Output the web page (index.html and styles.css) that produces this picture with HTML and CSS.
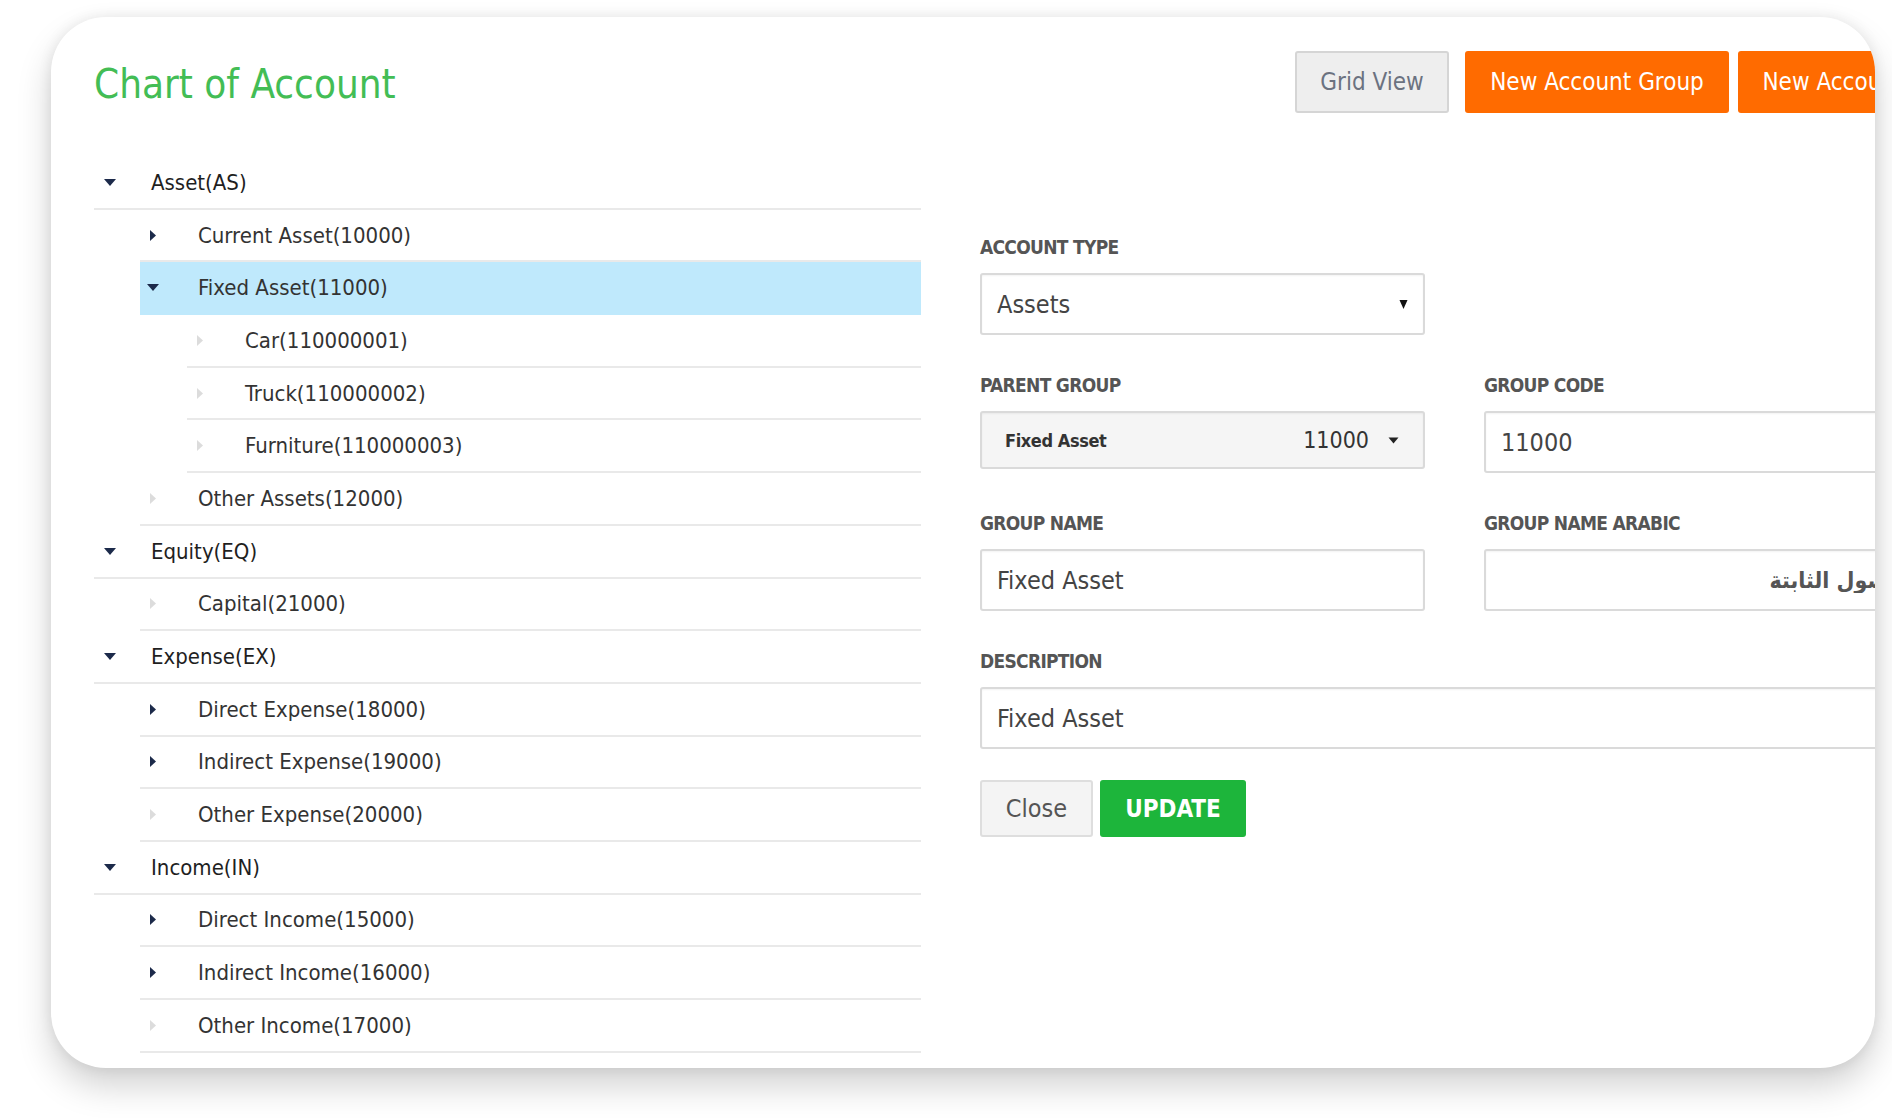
FILE: index.html
```html
<!DOCTYPE html>
<html lang="en">
<head>
<meta charset="utf-8">
<title>Chart of Account</title>
<link rel="stylesheet" href="styles.css">
</head>
<body>
<div class="page">
  <div class="card">
    <div class="header">
      <h1 class="title">Chart of Account</h1>
      <div class="btn btn-grid">Grid View</div>
      <div class="btn btn-orange btn-nag">New Account Group</div>
      <div class="btn btn-orange btn-na">New Account</div>
    </div>

    <div class="main">
      <div class="tree">
        <div class="row root"><span class="caret"><svg width="14" height="9" viewBox="0 0 14 9"><path d="M1 1h12L7 8z" class="dark"/></svg></span><span class="txt">Asset(AS)</span></div>
        <div class="row lvl1"><span class="caret"><svg width="8" height="13" viewBox="0 0 8 13"><path d="M1 1v11l6-5.5z" class="dark"/></svg></span><span class="txt">Current Asset(10000)</span></div>
        <div class="row lvl1 selected"><span class="caret"><svg width="14" height="9" viewBox="0 0 14 9"><path d="M1 1h12L7 8z" class="dark"/></svg></span><span class="txt">Fixed Asset(11000)</span></div>
        <div class="row lvl2"><span class="caret"><svg width="8" height="13" viewBox="0 0 8 13"><path d="M1 1v11l6-5.5z" class="light"/></svg></span><span class="txt">Car(110000001)</span></div>
        <div class="row lvl2"><span class="caret"><svg width="8" height="13" viewBox="0 0 8 13"><path d="M1 1v11l6-5.5z" class="light"/></svg></span><span class="txt">Truck(110000002)</span></div>
        <div class="row lvl2"><span class="caret"><svg width="8" height="13" viewBox="0 0 8 13"><path d="M1 1v11l6-5.5z" class="light"/></svg></span><span class="txt">Furniture(110000003)</span></div>
        <div class="row lvl1"><span class="caret"><svg width="8" height="13" viewBox="0 0 8 13"><path d="M1 1v11l6-5.5z" class="light"/></svg></span><span class="txt">Other Assets(12000)</span></div>
        <div class="row root"><span class="caret"><svg width="14" height="9" viewBox="0 0 14 9"><path d="M1 1h12L7 8z" class="dark"/></svg></span><span class="txt">Equity(EQ)</span></div>
        <div class="row lvl1"><span class="caret"><svg width="8" height="13" viewBox="0 0 8 13"><path d="M1 1v11l6-5.5z" class="light"/></svg></span><span class="txt">Capital(21000)</span></div>
        <div class="row root"><span class="caret"><svg width="14" height="9" viewBox="0 0 14 9"><path d="M1 1h12L7 8z" class="dark"/></svg></span><span class="txt">Expense(EX)</span></div>
        <div class="row lvl1"><span class="caret"><svg width="8" height="13" viewBox="0 0 8 13"><path d="M1 1v11l6-5.5z" class="dark"/></svg></span><span class="txt">Direct Expense(18000)</span></div>
        <div class="row lvl1"><span class="caret"><svg width="8" height="13" viewBox="0 0 8 13"><path d="M1 1v11l6-5.5z" class="dark"/></svg></span><span class="txt">Indirect Expense(19000)</span></div>
        <div class="row lvl1"><span class="caret"><svg width="8" height="13" viewBox="0 0 8 13"><path d="M1 1v11l6-5.5z" class="light"/></svg></span><span class="txt">Other Expense(20000)</span></div>
        <div class="row root"><span class="caret"><svg width="14" height="9" viewBox="0 0 14 9"><path d="M1 1h12L7 8z" class="dark"/></svg></span><span class="txt">Income(IN)</span></div>
        <div class="row lvl1"><span class="caret"><svg width="8" height="13" viewBox="0 0 8 13"><path d="M1 1v11l6-5.5z" class="dark"/></svg></span><span class="txt">Direct Income(15000)</span></div>
        <div class="row lvl1"><span class="caret"><svg width="8" height="13" viewBox="0 0 8 13"><path d="M1 1v11l6-5.5z" class="dark"/></svg></span><span class="txt">Indirect Income(16000)</span></div>
        <div class="row lvl1"><span class="caret"><svg width="8" height="13" viewBox="0 0 8 13"><path d="M1 1v11l6-5.5z" class="light"/></svg></span><span class="txt">Other Income(17000)</span></div>
      </div>

      <div class="form">
        <div class="field">
          <div class="label">Account Type</div>
          <div class="input select">
            <span class="grow">Assets</span>
            <svg width="9" height="11" viewBox="0 0 9 11"><path d="M0.5 1h8L4.5 10z" fill="#111"/></svg>
          </div>
        </div>
        <div class="field empty"></div>

        <div class="field">
          <div class="label">Parent Group</div>
          <div class="input parent">
            <span class="grow pname">Fixed Asset</span>
            <span class="pcode">11000</span>
            <svg class="pcaret" width="11" height="7" viewBox="0 0 11 7"><path d="M0.5 0.5h10L5.5 6.5z" fill="#222"/></svg>
          </div>
        </div>
        <div class="field">
          <div class="label">Group Code</div>
          <input class="input" type="text" value="11000" readonly>
        </div>

        <div class="field">
          <div class="label">Group Name</div>
          <input class="input" type="text" value="Fixed Asset" readonly>
        </div>
        <div class="field">
          <div class="label">Group Name Arabic</div>
          <input class="input arabic" type="text" dir="rtl" value="الأصول الثابتة" readonly>
        </div>

        <div class="field wide">
          <div class="label">Description</div>
          <input class="input" type="text" value="Fixed Asset" readonly>
        </div>

        <div class="actions">
          <div class="btn-close">Close</div>
          <div class="btn-update">UPDATE</div>
        </div>
      </div>
    </div>
  </div>
</div>
</body>
</html>
```
FILE: styles.css
```css
html, body {
  margin: 0;
  padding: 0;
  background: #ffffff;
}

body {
  font-family: "DejaVu Sans Condensed", "DejaVu Sans", sans-serif;
  font-stretch: condensed;
  color: #333;
}

.page {
  padding: 17px 0 50px 51px;
}

.card {
  width: 1824px;
  height: 1051px;
  box-sizing: border-box;
  padding: 34px 0 0 43px;
  background: #fff;
  border-radius: 55px;
  overflow: hidden;
  box-shadow: 0 18px 34px rgba(0, 0, 0, 0.18), 0 0 14px rgba(0, 0, 0, 0.08);
}

/* header */
.header {
  display: flex;
  align-items: center;
  height: 62px;
}

.title {
  flex: 0 0 1201px;
  margin: 0;
  font-size: 40px;
  font-weight: normal;
  color: #43bd55;
  line-height: 1;
  position: relative;
  top: 2px;
}

.btn {
  flex: none;
  height: 62px;
  box-sizing: border-box;
  display: flex;
  align-items: center;
  justify-content: center;
  font-size: 24px;
  border-radius: 3px;
  white-space: nowrap;
}

.btn-grid {
  width: 154px;
  margin-right: 16px;
  background: #eeeeee;
  border: 2px solid #d5d5d5;
  color: #6b7280;
}

.btn-orange {
  background: #ff6b00;
  color: #fff;
}

.btn-nag {
  width: 264px;
  margin-right: 9px;
}

.btn-na {
  width: 190px;
}

/* main */
.main {
  display: flex;
  align-items: flex-start;
  margin-top: 44px;
}

.tree {
  flex: 0 0 827px;
}

.row {
  display: flex;
  align-items: center;
  height: 50.7px;
  border-bottom: 2px solid #e9e9e9;
  font-size: 22px;
  color: #333;
  white-space: nowrap;
}

.row.root {
  color: #1f1f1f;
}

.row.lvl1 {
  margin-left: 46px;
}

.row.lvl2 {
  margin-left: 93px;
}

.row.selected {
  background: #bfe9fc;
  border-bottom-color: #bfe9fc;
}

.caret {
  display: flex;
  justify-content: center;
  align-items: center;
  width: 26px;
  margin-right: 32px;
}

.row.root .caret {
  width: 32px;
  margin-right: 25px;
}

.caret .dark {
  fill: #1c2a4a;
}

.caret .light {
  fill: #dcdcdc;
}

/* form */
.form {
  flex: none;
  margin-left: 59px;
  padding-top: 80px;
  display: grid;
  grid-template-columns: 445px 445px;
  column-gap: 59px;
  row-gap: 40px;
}

.field.wide {
  grid-column: 1 / span 2;
}

.label {
  height: 20px;
  line-height: 20px;
  margin-bottom: 16px;
  font-size: 19px;
  font-weight: bold;
  letter-spacing: -0.7px;
  text-transform: uppercase;
  color: #555;
  white-space: nowrap;
}

.input {
  display: flex;
  align-items: center;
  width: 100%;
  height: 62px;
  box-sizing: border-box;
  margin: 0;
  padding: 0 15px;
  border: 2px solid #dadada;
  border-radius: 3px;
  background: #fff;
  box-shadow: inset 0 1px 2px rgba(0, 0, 0, 0.05);
  font-family: "DejaVu Sans Condensed", "DejaVu Sans", sans-serif;
  font-stretch: condensed;
  font-size: 25px;
  color: #444;
  outline: none;
}

.select {
  padding-right: 15px;
}

.grow {
  flex: 1;
}

.parent {
  height: 58px;
  padding: 0 24px 0 23px;
  background: #f5f5f5;
}

.pname {
  font-size: 18px;
  font-weight: bold;
  color: #333;
  letter-spacing: -0.4px;
}

.pcode {
  font-size: 23px;
  color: #333;
}

.pcaret {
  margin-left: 19px;
}

.arabic {
  font-family: "DejaVu Sans", sans-serif;
  font-weight: bold;
  font-size: 23px;
  color: #555;
  text-align: right;
  padding-right: 17px;
}

.actions {
  grid-column: 1 / span 2;
  display: flex;
  gap: 7px;
  margin-top: -9px;
}

.btn-close,
.btn-update {
  height: 57px;
  box-sizing: border-box;
  display: flex;
  align-items: center;
  justify-content: center;
  border-radius: 3px;
}

.btn-close {
  width: 113px;
  background: #f4f4f4;
  border: 2px solid #dedede;
  font-size: 25px;
  color: #555;
}

.btn-update {
  width: 146px;
  background: #1db53b;
  color: #fff;
  font-size: 24px;
  font-weight: bold;
}
```
